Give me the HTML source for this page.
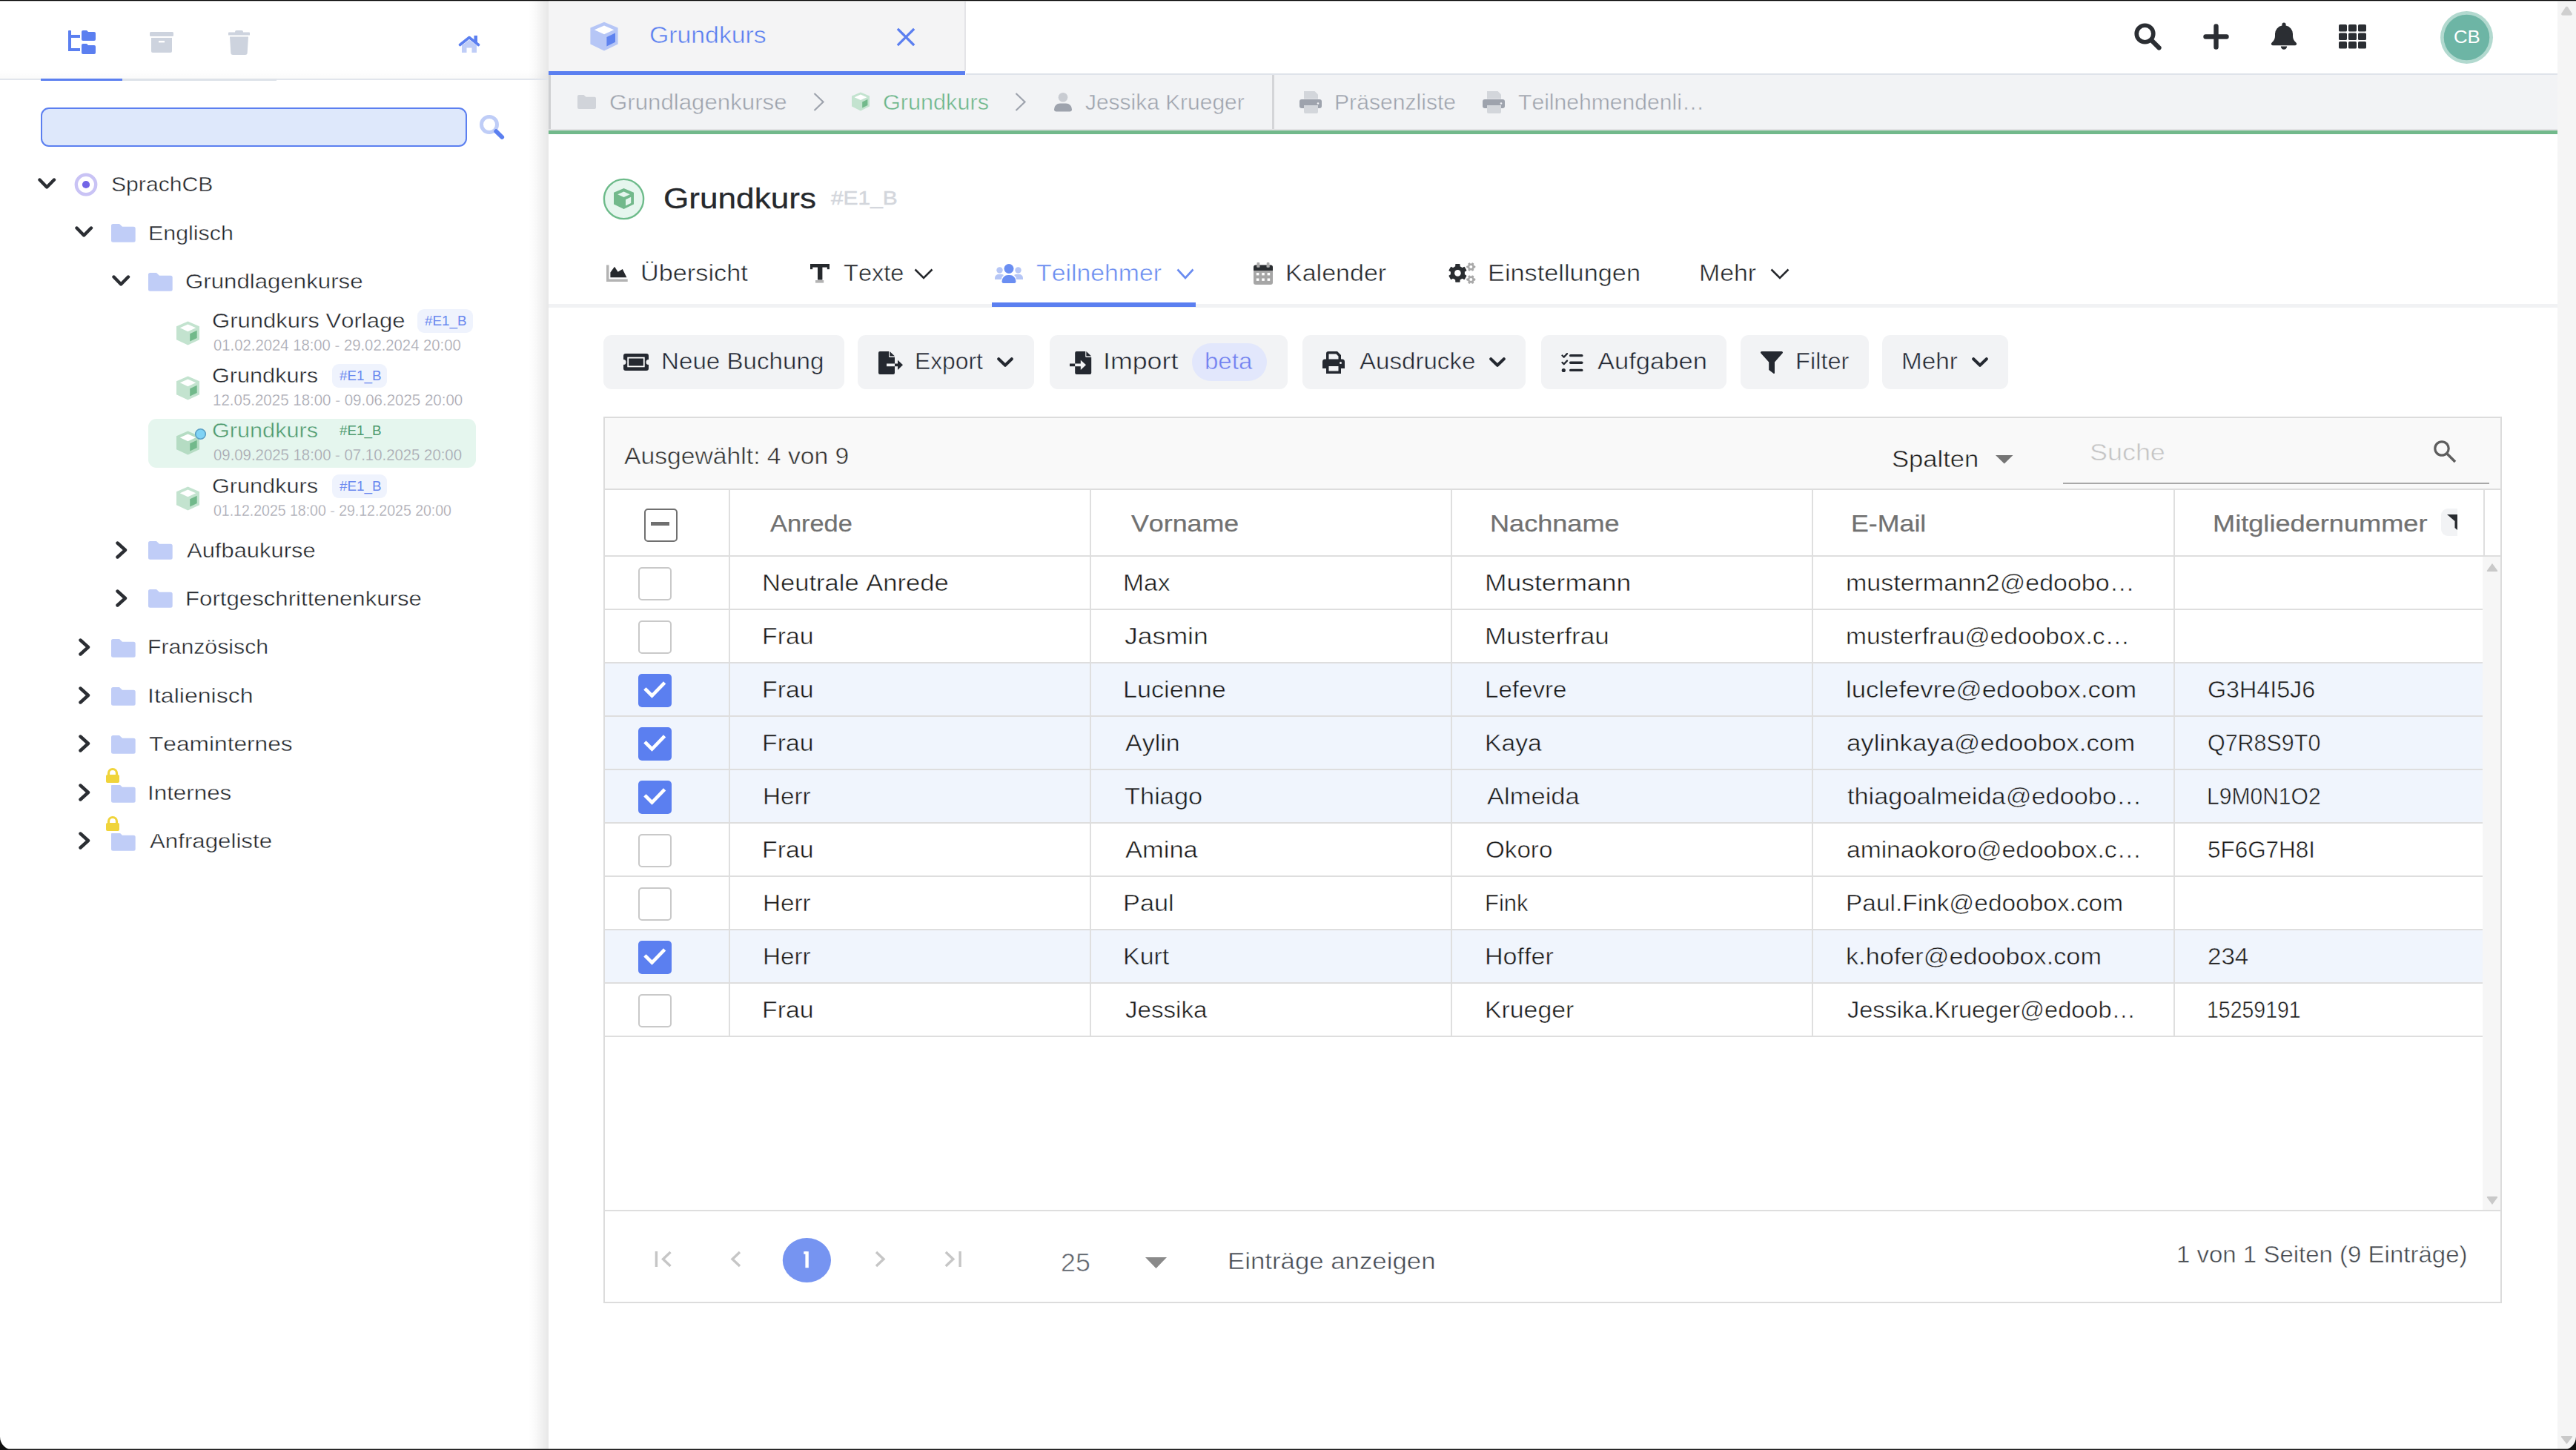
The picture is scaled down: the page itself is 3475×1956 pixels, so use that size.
<!DOCTYPE html>
<html><head><meta charset="utf-8"><title>Grundkurs</title><style>
html,body{margin:0;padding:0}
body{width:3475px;height:1956px;position:relative;overflow:hidden;background:#ffffff;font-family:"Liberation Sans",sans-serif;font-kerning:none}
.t{position:absolute;white-space:pre;transform-origin:0 0}
.r{position:absolute;display:block}
</style></head><body>
<div class="r" style="left:0px;top:0px;width:740px;height:1956px;background:#ffffff;"></div>
<div class="r" style="left:712px;top:0px;width:28px;height:1956px;background:linear-gradient(to right, rgba(0,0,0,0) 0%, rgba(0,0,0,0.02) 35%, rgba(0,0,0,0.06) 70%, rgba(0,0,0,0.095) 100%);"></div>
<svg class="r" style="left:92px;top:41px;" width="37" height="33" viewBox="0 0 37 33"><g fill="#5b7ff0">
<rect x="0" y="0" width="4" height="28" rx="1"/>
<rect x="0" y="6" width="16" height="4"/>
<rect x="0" y="24" width="16" height="4"/>
<path d="M18 2a2 2 0 0 1 2-2h5l2 2h8a2 2 0 0 1 2 2v8a2 2 0 0 1-2 2h-15a2 2 0 0 1-2-2z"/>
<path d="M18 20a2 2 0 0 1 2-2h5l2 2h8a2 2 0 0 1 2 2v8a2 2 0 0 1-2 2h-15a2 2 0 0 1-2-2z"/>
</g></svg>
<svg class="r" style="left:202px;top:43px;" width="33" height="29" viewBox="0 0 33 29"><g fill="#cdd3de">
<rect x="0" y="0" width="32" height="6" rx="1.5"/>
<path d="M2 8h28v18a2 2 0 0 1-2 2h-24a2 2 0 0 1-2-2z"/>
<rect x="12" y="12" width="8" height="2.4" fill="#fff"/>
</g></svg>
<svg class="r" style="left:308px;top:41px;" width="29" height="33" viewBox="0 0 29 33"><g fill="#cdd3de">
<path d="M9 2a2 2 0 0 1 2-2h7a2 2 0 0 1 2 2v0.5h8a1 1 0 0 1 1 1v3h-29v-3a1 1 0 0 1 1-1h8z"/>
<path d="M2 8.5h25l-1.3 21.5a3 3 0 0 1-3 3h-16.4a3 3 0 0 1-3-3z"/>
</g></svg>
<svg class="r" style="left:618px;top:48px;" width="33" height="25" viewBox="0 0 33 25"><path d="M2.5 12.5 L15 2.5 L27.5 12.5" fill="none" stroke="#5b7ff0" stroke-width="3.6" stroke-linecap="round" stroke-linejoin="round"/>
<rect x="21.5" y="0" width="4.5" height="9" fill="#5b7ff0"/>
<path d="M5 13.2 L15 5.8 L25 13.2 V23 H18.5 V16.5 H11.5 V23 H5z" fill="#bfcdf7"/></svg>
<div class="r" style="left:0px;top:94px;width:740px;height:12px;background:linear-gradient(to bottom, rgba(0,0,0,0), rgba(0,0,0,0.018));"></div>
<div class="r" style="left:0px;top:106px;width:740px;height:2px;background:#e1e5ec;"></div>
<div class="r" style="left:165px;top:106px;width:208px;height:3px;background:#dde2e9;"></div>
<div class="r" style="left:55px;top:106px;width:110px;height:3px;background:#5b7ff0;"></div>
<div class="r" style="left:55px;top:145px;width:575px;height:53px;background:#dee8fb;border:2px solid #5b7ff0;border-radius:11px;box-sizing:border-box;"></div>
<svg class="r" style="left:646px;top:154px;" width="36" height="36" viewBox="0 0 36 36"><circle cx="14" cy="14" r="10.5" fill="none" stroke="#bfcdf7" stroke-width="5"/>
<path d="M23.2 23.2 L31.2 31" stroke="#5b7ff0" stroke-width="5.8" stroke-linecap="round"/></svg>
<svg class="r" style="left:51px;top:240px;" width="25" height="16" viewBox="0 0 25 16"><path d="M2.5 2.5 L12.2 12.5 L22 2.5" fill="none" stroke="#2b2e33" stroke-width="4.4" stroke-linecap="round" stroke-linejoin="round"/></svg>
<svg class="r" style="left:100px;top:233px;" width="32" height="32" viewBox="0 0 32 32"><circle cx="16" cy="16" r="13.2" fill="none" stroke="#c9c3f5" stroke-width="4.4"/><circle cx="16" cy="16" r="5.1" fill="#7266e6"/></svg>
<div class="t" style="left:150.44px;top:234px;font-size:28.25px;line-height:28.25px;color:#22252a;transform:scaleX(1.0667);-webkit-text-stroke:0.45px #ffffff;">SprachCB</div>
<svg class="r" style="left:101px;top:305px;" width="25" height="16" viewBox="0 0 25 16"><path d="M2.5 2.5 L12.2 12.5 L22 2.5" fill="none" stroke="#2b2e33" stroke-width="4.4" stroke-linecap="round" stroke-linejoin="round"/></svg>
<svg class="r" style="left:150px;top:302px;" width="33" height="25" viewBox="0 0 33 25"><path d="M0 2.5a2.5 2.5 0 0 1 2.5-2.5h8.5l4 3.8h15.2a2.5 2.5 0 0 1 2.5 2.5v16a2.5 2.5 0 0 1-2.5 2.5h-27.7a2.5 2.5 0 0 1-2.5-2.5z" fill="#c0cdf7"/></svg>
<div class="t" style="left:199.67px;top:300px;font-size:28.25px;line-height:28.25px;color:#22252a;transform:scaleX(1.0751);-webkit-text-stroke:0.45px #ffffff;">Englisch</div>
<svg class="r" style="left:151px;top:371px;" width="25" height="16" viewBox="0 0 25 16"><path d="M2.5 2.5 L12.2 12.5 L22 2.5" fill="none" stroke="#2b2e33" stroke-width="4.4" stroke-linecap="round" stroke-linejoin="round"/></svg>
<svg class="r" style="left:200px;top:368px;" width="33" height="25" viewBox="0 0 33 25"><path d="M0 2.5a2.5 2.5 0 0 1 2.5-2.5h8.5l4 3.8h15.2a2.5 2.5 0 0 1 2.5 2.5v16a2.5 2.5 0 0 1-2.5 2.5h-27.7a2.5 2.5 0 0 1-2.5-2.5z" fill="#c0cdf7"/></svg>
<div class="t" style="left:250.14px;top:365px;font-size:28.25px;line-height:28.25px;color:#22252a;transform:scaleX(1.1056);-webkit-text-stroke:0.45px #ffffff;">Grundlagenkurse</div>
<svg class="r" style="left:237px;top:433.1px;" width="33" height="33" viewBox="0 0 33 33"><path d="M16.5 0.5 L32 7.2 V25.3 L16.5 32.5 L1 25.3 V7.2z" fill="#c3e3cf"/>
<path d="M16.5 4.6 L27.2 9.3 L16.5 14.2 L5.8 9.3z" fill="#ffffff"/>
<path d="M19.2 17.3 L28.7 12.7 V23 L19.2 27.6z" fill="#72b98b"/></svg>
<div class="t" style="left:286.35px;top:418px;font-size:28.25px;line-height:28.25px;color:#22252a;transform:scaleX(1.0985);-webkit-text-stroke:0.45px #ffffff;">Grundkurs Vorlage</div>
<div class="r" style="left:563px;top:417px;width:75px;height:32px;background:#eff3fd;border-radius:9px;"></div>
<div class="t" style="left:572.91px;top:423px;font-size:19.00px;line-height:19.00px;color:#6a88ef;transform:scaleX(0.9901);">#E1_B</div>
<div class="t" style="left:287.79px;top:456px;font-size:21.25px;line-height:21.25px;color:#a3a3ad;transform:scaleX(0.9544);-webkit-text-stroke:0.34px #ffffff;">01.02.2024 18:00 - 29.02.2024 20:00</div>
<svg class="r" style="left:237px;top:506.70000000000005px;" width="33" height="33" viewBox="0 0 33 33"><path d="M16.5 0.5 L32 7.2 V25.3 L16.5 32.5 L1 25.3 V7.2z" fill="#c3e3cf"/>
<path d="M16.5 4.6 L27.2 9.3 L16.5 14.2 L5.8 9.3z" fill="#ffffff"/>
<path d="M19.2 17.3 L28.7 12.7 V23 L19.2 27.6z" fill="#72b98b"/></svg>
<div class="t" style="left:286.37px;top:492px;font-size:28.25px;line-height:28.25px;color:#22252a;transform:scaleX(1.0847);-webkit-text-stroke:0.45px #ffffff;">Grundkurs</div>
<div class="r" style="left:448px;top:491px;width:74px;height:32px;background:#eff3fd;border-radius:9px;"></div>
<div class="t" style="left:457.91px;top:497px;font-size:19.00px;line-height:19.00px;color:#6a88ef;transform:scaleX(0.9901);">#E1_B</div>
<div class="t" style="left:287.06px;top:530px;font-size:21.25px;line-height:21.25px;color:#a3a3ad;transform:scaleX(0.9642);-webkit-text-stroke:0.34px #ffffff;">12.05.2025 18:00 - 09.06.2025 20:00</div>
<div class="r" style="left:200px;top:565px;width:442px;height:66px;background:#e5f6ee;border-radius:11px;"></div>
<svg class="r" style="left:237px;top:580.8px;" width="33" height="33" viewBox="0 0 33 33"><path d="M16.5 0.5 L32 7.2 V25.3 L16.5 32.5 L1 25.3 V7.2z" fill="#b5dcc3"/>
<path d="M16.5 4.6 L27.2 9.3 L16.5 14.2 L5.8 9.3z" fill="#ffffff"/>
<path d="M19.2 17.3 L28.7 12.7 V23 L19.2 27.6z" fill="#72b98b"/></svg>
<div class="t" style="left:286.37px;top:566px;font-size:28.25px;line-height:28.25px;color:#4e9a6e;transform:scaleX(1.0847);-webkit-text-stroke:0.45px #e5f6ee;">Grundkurs</div>
<div class="t" style="left:457.91px;top:571px;font-size:19.00px;line-height:19.00px;color:#4e9a6e;transform:scaleX(0.9901);">#E1_B</div>
<div class="t" style="left:287.79px;top:604px;font-size:21.25px;line-height:21.25px;color:#a3a3ad;transform:scaleX(0.9578);-webkit-text-stroke:0.34px #e5f6ee;">09.09.2025 18:00 - 07.10.2025 20:00</div>
<svg class="r" style="left:262px;top:577px;" width="17" height="17" viewBox="0 0 17 17"><circle cx="8.5" cy="8.5" r="6.8" fill="#7fd3f5" stroke="#5a9fc4" stroke-width="1.6"/></svg>
<svg class="r" style="left:237px;top:656.0px;" width="33" height="33" viewBox="0 0 33 33"><path d="M16.5 0.5 L32 7.2 V25.3 L16.5 32.5 L1 25.3 V7.2z" fill="#c3e3cf"/>
<path d="M16.5 4.6 L27.2 9.3 L16.5 14.2 L5.8 9.3z" fill="#ffffff"/>
<path d="M19.2 17.3 L28.7 12.7 V23 L19.2 27.6z" fill="#72b98b"/></svg>
<div class="t" style="left:286.37px;top:641px;font-size:28.25px;line-height:28.25px;color:#22252a;transform:scaleX(1.0847);-webkit-text-stroke:0.45px #ffffff;">Grundkurs</div>
<div class="r" style="left:448px;top:640px;width:74px;height:32px;background:#eff3fd;border-radius:9px;"></div>
<div class="t" style="left:457.91px;top:646px;font-size:19.00px;line-height:19.00px;color:#6a88ef;transform:scaleX(0.9901);">#E1_B</div>
<div class="t" style="left:287.82px;top:679px;font-size:21.25px;line-height:21.25px;color:#a3a3ad;transform:scaleX(0.9176);-webkit-text-stroke:0.34px #ffffff;">01.12.2025 18:00 - 29.12.2025 20:00</div>
<svg class="r" style="left:156px;top:730px;" width="17" height="24" viewBox="0 0 17 24"><path d="M2.5 2.5 L13 12 L2.5 21.5" fill="none" stroke="#2b2e33" stroke-width="4.4" stroke-linecap="round" stroke-linejoin="round"/></svg>
<svg class="r" style="left:200px;top:730px;" width="33" height="25" viewBox="0 0 33 25"><path d="M0 2.5a2.5 2.5 0 0 1 2.5-2.5h8.5l4 3.8h15.2a2.5 2.5 0 0 1 2.5 2.5v16a2.5 2.5 0 0 1-2.5 2.5h-27.7a2.5 2.5 0 0 1-2.5-2.5z" fill="#c0cdf7"/></svg>
<div class="t" style="left:252.00px;top:728px;font-size:28.25px;line-height:28.25px;color:#22252a;transform:scaleX(1.0950);-webkit-text-stroke:0.45px #ffffff;">Aufbaukurse</div>
<svg class="r" style="left:156px;top:795px;" width="17" height="24" viewBox="0 0 17 24"><path d="M2.5 2.5 L13 12 L2.5 21.5" fill="none" stroke="#2b2e33" stroke-width="4.4" stroke-linecap="round" stroke-linejoin="round"/></svg>
<svg class="r" style="left:200px;top:795px;" width="33" height="25" viewBox="0 0 33 25"><path d="M0 2.5a2.5 2.5 0 0 1 2.5-2.5h8.5l4 3.8h15.2a2.5 2.5 0 0 1 2.5 2.5v16a2.5 2.5 0 0 1-2.5 2.5h-27.7a2.5 2.5 0 0 1-2.5-2.5z" fill="#c0cdf7"/></svg>
<div class="t" style="left:249.50px;top:793px;font-size:28.25px;line-height:28.25px;color:#22252a;transform:scaleX(1.1040);-webkit-text-stroke:0.45px #ffffff;">Fortgeschrittenenkurse</div>
<svg class="r" style="left:106px;top:860.5px;" width="17" height="24" viewBox="0 0 17 24"><path d="M2.5 2.5 L13 12 L2.5 21.5" fill="none" stroke="#2b2e33" stroke-width="4.4" stroke-linecap="round" stroke-linejoin="round"/></svg>
<svg class="r" style="left:150px;top:861.5px;" width="33" height="25" viewBox="0 0 33 25"><path d="M0 2.5a2.5 2.5 0 0 1 2.5-2.5h8.5l4 3.8h15.2a2.5 2.5 0 0 1 2.5 2.5v16a2.5 2.5 0 0 1-2.5 2.5h-27.7a2.5 2.5 0 0 1-2.5-2.5z" fill="#c0cdf7"/></svg>
<div class="t" style="left:199.48px;top:858px;font-size:28.25px;line-height:28.25px;color:#22252a;transform:scaleX(1.0711);-webkit-text-stroke:0.45px #ffffff;">Französisch</div>
<svg class="r" style="left:106px;top:926.3px;" width="17" height="24" viewBox="0 0 17 24"><path d="M2.5 2.5 L13 12 L2.5 21.5" fill="none" stroke="#2b2e33" stroke-width="4.4" stroke-linecap="round" stroke-linejoin="round"/></svg>
<svg class="r" style="left:150px;top:927.3px;" width="33" height="25" viewBox="0 0 33 25"><path d="M0 2.5a2.5 2.5 0 0 1 2.5-2.5h8.5l4 3.8h15.2a2.5 2.5 0 0 1 2.5 2.5v16a2.5 2.5 0 0 1-2.5 2.5h-27.7a2.5 2.5 0 0 1-2.5-2.5z" fill="#c0cdf7"/></svg>
<div class="t" style="left:199.02px;top:924px;font-size:28.25px;line-height:28.25px;color:#22252a;transform:scaleX(1.1346);-webkit-text-stroke:0.45px #ffffff;">Italienisch</div>
<svg class="r" style="left:106px;top:991.4px;" width="17" height="24" viewBox="0 0 17 24"><path d="M2.5 2.5 L13 12 L2.5 21.5" fill="none" stroke="#2b2e33" stroke-width="4.4" stroke-linecap="round" stroke-linejoin="round"/></svg>
<svg class="r" style="left:150px;top:992.4px;" width="33" height="25" viewBox="0 0 33 25"><path d="M0 2.5a2.5 2.5 0 0 1 2.5-2.5h8.5l4 3.8h15.2a2.5 2.5 0 0 1 2.5 2.5v16a2.5 2.5 0 0 1-2.5 2.5h-27.7a2.5 2.5 0 0 1-2.5-2.5z" fill="#c0cdf7"/></svg>
<div class="t" style="left:201.27px;top:989px;font-size:28.25px;line-height:28.25px;color:#22252a;transform:scaleX(1.1214);-webkit-text-stroke:0.45px #ffffff;">Teaminternes</div>
<svg class="r" style="left:106px;top:1056.6px;" width="17" height="24" viewBox="0 0 17 24"><path d="M2.5 2.5 L13 12 L2.5 21.5" fill="none" stroke="#2b2e33" stroke-width="4.4" stroke-linecap="round" stroke-linejoin="round"/></svg>
<svg class="r" style="left:150px;top:1057.6px;" width="33" height="25" viewBox="0 0 33 25"><path d="M0 2.5a2.5 2.5 0 0 1 2.5-2.5h8.5l4 3.8h15.2a2.5 2.5 0 0 1 2.5 2.5v16a2.5 2.5 0 0 1-2.5 2.5h-27.7a2.5 2.5 0 0 1-2.5-2.5z" fill="#c0cdf7"/></svg>
<div class="t" style="left:199.08px;top:1055px;font-size:28.25px;line-height:28.25px;color:#22252a;transform:scaleX(1.1096);-webkit-text-stroke:0.45px #ffffff;">Internes</div>
<svg class="r" style="left:140px;top:1034.6px;" width="24" height="24" viewBox="0 0 24 24"><rect x="0" y="0" width="24" height="24" fill="#ffffff"/>
<path d="M6.5 10.5 V8 a5.5 5.5 0 0 1 11 0 V10.5" fill="none" stroke="#f0d43a" stroke-width="3.2"/>
<rect x="3" y="10" width="18" height="11" rx="2" fill="#f0d43a"/></svg>
<svg class="r" style="left:106px;top:1121.8px;" width="17" height="24" viewBox="0 0 17 24"><path d="M2.5 2.5 L13 12 L2.5 21.5" fill="none" stroke="#2b2e33" stroke-width="4.4" stroke-linecap="round" stroke-linejoin="round"/></svg>
<svg class="r" style="left:150px;top:1122.8px;" width="33" height="25" viewBox="0 0 33 25"><path d="M0 2.5a2.5 2.5 0 0 1 2.5-2.5h8.5l4 3.8h15.2a2.5 2.5 0 0 1 2.5 2.5v16a2.5 2.5 0 0 1-2.5 2.5h-27.7a2.5 2.5 0 0 1-2.5-2.5z" fill="#c0cdf7"/></svg>
<div class="t" style="left:201.90px;top:1120px;font-size:28.25px;line-height:28.25px;color:#22252a;transform:scaleX(1.1062);-webkit-text-stroke:0.45px #ffffff;">Anfrageliste</div>
<svg class="r" style="left:140px;top:1099.8px;" width="24" height="24" viewBox="0 0 24 24"><rect x="0" y="0" width="24" height="24" fill="#ffffff"/>
<path d="M6.5 10.5 V8 a5.5 5.5 0 0 1 11 0 V10.5" fill="none" stroke="#f0d43a" stroke-width="3.2"/>
<rect x="3" y="10" width="18" height="11" rx="2" fill="#f0d43a"/></svg>
<div class="r" style="left:740px;top:0px;width:2710px;height:101px;background:#ffffff;"></div>
<div class="r" style="left:740px;top:2px;width:562px;height:94px;background:#f4f4f5;"></div>
<div class="r" style="left:1301px;top:2px;width:2px;height:94px;background:#e4e4e7;"></div>
<div class="r" style="left:740px;top:96px;width:562px;height:5px;background:#5b7ff0;"></div>
<div class="r" style="left:1303px;top:99px;width:2147px;height:2px;background:#dfe3ea;"></div>
<svg class="r" style="left:795px;top:29px;" width="40" height="40" viewBox="0 0 40 40"><path d="M20 0.8 L38.6 8.6 V30.4 L20 39.4 L1.4 30.4 V8.6z" fill="#b6c6f6"/>
<path d="M20 5.6 L33.2 11.2 L20 17.2 L6.8 11.2z" fill="#ffffff"/>
<path d="M23.4 21 L35 15.4 V27.8 L23.4 33.4z" fill="#5f83ef"/></svg>
<div class="t" style="left:876.11px;top:33px;font-size:30.75px;line-height:30.75px;color:#5b7ff0;transform:scaleX(1.0987);-webkit-text-stroke:0.49px #f4f4f5;">Grundkurs</div>
<svg class="r" style="left:1209px;top:37px;" width="26" height="26" viewBox="0 0 26 26"><path d="M3 3 L23 23 M23 3 L3 23" stroke="#5b7ff0" stroke-width="3.2" stroke-linecap="square"/></svg>
<svg class="r" style="left:2878px;top:30px;" width="40" height="40" viewBox="0 0 40 40"><circle cx="15.5" cy="15.5" r="11.3" fill="none" stroke="#2b2e33" stroke-width="5.6"/><path d="M24 24 L34.5 34.5" stroke="#2b2e33" stroke-width="6.2" stroke-linecap="round"/></svg>
<svg class="r" style="left:2972px;top:32px;" width="35" height="35" viewBox="0 0 35 35"><path d="M17.5 3.5 V31.5 M3.5 17.5 H31.5" stroke="#2b2e33" stroke-width="6.4" stroke-linecap="round"/></svg>
<svg class="r" style="left:3063px;top:30px;" width="36" height="39" viewBox="0 0 36 39"><path d="M18 0.5 a2.6 2.6 0 0 1 2.6 2.6 v1.4 a11.5 11.5 0 0 1 9.4 11.3 v2.6 c0 3.3 1.4 6.3 3.9 8.6 l0.8 0.9 a2 2 0 0 1 -1.4 3.3 h-30.6 a2 2 0 0 1 -1.4 -3.3 l0.8 -0.9 c2.5 -2.3 3.9 -5.3 3.9 -8.6 v-2.6 a11.5 11.5 0 0 1 9.4 -11.3 v-1.4 a2.6 2.6 0 0 1 2.6 -2.6z" fill="#2b2e33"/>
<path d="M13.8 32.6 h8.4 a4.2 4.2 0 0 1 -8.4 0z" fill="#2b2e33"/></svg>
<svg class="r" style="left:3155px;top:33px;" width="38" height="33" viewBox="0 0 38 33"><rect x="0" y="0.0" width="11" height="9.5" rx="1.6" fill="#2b2e33"/><rect x="13" y="0.0" width="11" height="9.5" rx="1.6" fill="#2b2e33"/><rect x="26" y="0.0" width="11" height="9.5" rx="1.6" fill="#2b2e33"/><rect x="0" y="11.5" width="11" height="9.5" rx="1.6" fill="#2b2e33"/><rect x="13" y="11.5" width="11" height="9.5" rx="1.6" fill="#2b2e33"/><rect x="26" y="11.5" width="11" height="9.5" rx="1.6" fill="#2b2e33"/><rect x="0" y="23.0" width="11" height="9.5" rx="1.6" fill="#2b2e33"/><rect x="13" y="23.0" width="11" height="9.5" rx="1.6" fill="#2b2e33"/><rect x="26" y="23.0" width="11" height="9.5" rx="1.6" fill="#2b2e33"/></svg>
<svg class="r" style="left:3291px;top:14px;" width="73" height="73" viewBox="0 0 73 73"><circle cx="36.5" cy="36.5" r="35.5" fill="#b2d9cf"/><circle cx="36.5" cy="36.5" r="30.8" fill="#6db5a5"/></svg>
<div class="t" style="left:3310.41px;top:38px;font-size:24.00px;line-height:24.00px;color:#ffffff;transform:scaleX(1.0733);">CB</div>
<div class="r" style="left:740px;top:101px;width:2710px;height:73px;background:#f2f3f5;"></div>
<div class="r" style="left:740px;top:101px;width:3px;height:73px;background:#cfd0d2;"></div>
<div class="r" style="left:740px;top:174px;width:2710px;height:2px;background:#e2e2e4;"></div>
<div class="r" style="left:740px;top:176px;width:2710px;height:5px;background:#72b98b;"></div>
<svg class="r" style="left:779px;top:128px;" width="25" height="19" viewBox="0 0 25 19"><path d="M0 2a2 2 0 0 1 2-2h6.5l3 2.8h11.5a2 2 0 0 1 2 2v12.2a2 2 0 0 1-2 2h-21a2 2 0 0 1-2-2z" fill="#d1d4da"/></svg>
<div class="t" style="left:821.84px;top:124px;font-size:29.00px;line-height:29.00px;color:#9ea3ad;transform:scaleX(1.0770);-webkit-text-stroke:0.46px #f2f3f5;">Grundlagenkurse</div>
<svg class="r" style="left:1096px;top:124px;" width="18" height="27" viewBox="0 0 18 27"><path d="M2.5 2 L14.5 13.5 L2.5 25" fill="none" stroke="#9ea3ad" stroke-width="2.2"/></svg>
<svg class="r" style="left:1148px;top:124px;" width="26" height="26" viewBox="0 0 26 26"><path d="M13 0.5 L25 5.5 V19.5 L13 25.5 L1 19.5 V5.5z" fill="#c3e3cf"/>
<path d="M13 3.6 L21.4 7.2 L13 11 L4.6 7.2z" fill="#ffffff"/>
<path d="M15.2 13.5 L22.4 10 V18 L15.2 21.5z" fill="#72b98b"/></svg>
<div class="t" style="left:1191.47px;top:124px;font-size:29.00px;line-height:29.00px;color:#6cb68a;transform:scaleX(1.0559);-webkit-text-stroke:0.46px #f2f3f5;">Grundkurs</div>
<svg class="r" style="left:1368px;top:124px;" width="18" height="27" viewBox="0 0 18 27"><path d="M2.5 2 L14.5 13.5 L2.5 25" fill="none" stroke="#9ea3ad" stroke-width="2.2"/></svg>
<svg class="r" style="left:1422px;top:125px;" width="24" height="26" viewBox="0 0 24 26"><circle cx="12" cy="6.3" r="6.3" fill="#c9ccd2"/><path d="M0 22.5 a8 8 0 0 1 8-8h8a8 8 0 0 1 8 8v0.5a2.4 2.4 0 0 1-2.4 2.4h-19.2a2.4 2.4 0 0 1-2.4-2.4z" fill="#9ea3ad"/></svg>
<div class="t" style="left:1463.55px;top:124px;font-size:29.00px;line-height:29.00px;color:#9ea3ad;transform:scaleX(1.0323);-webkit-text-stroke:0.46px #f2f3f5;">Jessika Krueger</div>
<div class="r" style="left:1716px;top:101px;width:3px;height:73px;background:#d4d5d8;"></div>
<svg class="r" style="left:1753px;top:123px;" width="31" height="30" viewBox="0 0 31 30"><path d="M6 0 h14.5 l4.5 4.5 v6 h-19z" fill="#d3d6db"/>
<rect x="0" y="11" width="30" height="12" rx="3" fill="#9ea3ad"/>
<circle cx="25" cy="16.5" r="1.3" fill="#f2f3f5"/>
<path d="M6 19 h19 v9 a2 2 0 0 1-2 2h-15a2 2 0 0 1-2-2z" fill="#d3d6db"/></svg>
<div class="t" style="left:1800.19px;top:124px;font-size:29.00px;line-height:29.00px;color:#9ea3ad;transform:scaleX(1.0390);-webkit-text-stroke:0.46px #f2f3f5;">Präsenzliste</div>
<svg class="r" style="left:2000px;top:123px;" width="31" height="30" viewBox="0 0 31 30"><path d="M6 0 h14.5 l4.5 4.5 v6 h-19z" fill="#d3d6db"/>
<rect x="0" y="11" width="30" height="12" rx="3" fill="#9ea3ad"/>
<circle cx="25" cy="16.5" r="1.3" fill="#f2f3f5"/>
<path d="M6 19 h19 v9 a2 2 0 0 1-2 2h-15a2 2 0 0 1-2-2z" fill="#d3d6db"/></svg>
<div class="t" style="left:2048.40px;top:124px;font-size:29.00px;line-height:29.00px;color:#9ea3ad;transform:scaleX(1.0383);-webkit-text-stroke:0.46px #f2f3f5;">Teilnehmendenli…</div>
<div class="r" style="left:740px;top:181px;width:2710px;height:1775px;background:#ffffff;"></div>
<svg class="r" style="left:813px;top:240px;" width="57" height="57" viewBox="0 0 57 57"><circle cx="28.5" cy="28.5" r="26.6" fill="#e6f6ee" stroke="#6dbb8a" stroke-width="2.4"/>
<path d="M28.5 14 L42 19.8 V35.6 L28.5 42 L15 35.6 V19.8z" fill="#72b98b"/>
<path d="M28.5 18.6 L36.8 22.2 L28.5 26 L20.2 22.2z" fill="#e6f6ee"/>
<path d="M31 29.3 L38.2 25.8 V34 L31 37.6z" fill="#e6f6ee"/></svg>
<div class="t" style="left:895.49px;top:248px;font-size:39.50px;line-height:39.50px;color:#26292d;transform:scaleX(1.1170);-webkit-text-stroke:0.3px #26292d;">Grundkurs</div>
<div class="t" style="left:1120.85px;top:254px;font-size:26.25px;line-height:26.25px;color:#d3d6dc;transform:scaleX(1.1383);-webkit-text-stroke:0.45px #d3d6dc;">#E1_B</div>
<svg class="r" style="left:817px;top:356px;" width="31" height="25" viewBox="0 0 31 25"><path d="M1 1.4 h3.5 v19 h25.2 v3.5 h-28.7z" fill="#b3b3b3"/>
<path d="M6.4 18.2 V11.5 L12 3.7 L16.6 10.7 L22.8 7 L28.4 18.2z" fill="#26292d"/></svg>
<div class="t" style="left:864.23px;top:354px;font-size:30.75px;line-height:30.75px;color:#25282c;transform:scaleX(1.1146);-webkit-text-stroke:0.49px #ffffff;">Übersicht</div>
<svg class="r" style="left:1093px;top:356px;" width="27" height="27" viewBox="0 0 27 27"><g fill="#26292d"><rect x="0" y="0" width="26" height="4.6"/><rect x="0" y="0" width="3.2" height="7.2"/><rect x="22.8" y="0" width="3.2" height="7.2"/><rect x="10" y="0" width="6.4" height="21.5"/></g>
<rect x="7" y="22" width="11.2" height="3.6" fill="#b3b3b3"/></svg>
<div class="t" style="left:1138.35px;top:354px;font-size:30.75px;line-height:30.75px;color:#25282c;transform:scaleX(1.0588);-webkit-text-stroke:0.49px #ffffff;">Texte</div>
<svg class="r" style="left:1233px;top:362px;" width="26" height="15" viewBox="0 0 26 15"><path d="M1.5 1.5 L13.0 13 L24.5 1.5" fill="none" stroke="#25282c" stroke-width="2.6"/></svg>
<svg class="r" style="left:1342px;top:356px;" width="38" height="26" viewBox="0 0 38 26"><circle cx="19" cy="6.5" r="6.5" fill="#6a8ef2"/>
<circle cx="6.5" cy="8.5" r="4.2" fill="#b6c6f6"/><circle cx="31.5" cy="8.5" r="4.2" fill="#b6c6f6"/>
<path d="M0 19 a5 5 0 0 1 5-5h4a5 5 0 0 1 3 1 a8 8 0 0 0 -3 6 v0h-9z" fill="#b6c6f6"/>
<path d="M38 19 a5 5 0 0 0 -5-5h-4a5 5 0 0 0 -3 1 a8 8 0 0 1 3 6 v0h9z" fill="#b6c6f6"/>
<path d="M9.5 23.5 a8.5 8.5 0 0 1 8.5-8.5h2a8.5 8.5 0 0 1 8.5 8.5 v0.3 a2.2 2.2 0 0 1 -2.2 2.2 h-14.6 a2.2 2.2 0 0 1 -2.2 -2.2z" fill="#6a8ef2"/></svg>
<div class="t" style="left:1398.32px;top:354px;font-size:30.75px;line-height:30.75px;color:#6a8cf0;transform:scaleX(1.0985);-webkit-text-stroke:0.49px #ffffff;">Teilnehmer</div>
<svg class="r" style="left:1587px;top:362px;" width="24" height="15" viewBox="0 0 24 15"><path d="M1.5 1.5 L12.0 13 L22.5 1.5" fill="none" stroke="#6a8cf0" stroke-width="2.6"/></svg>
<div class="r" style="left:1338px;top:408px;width:275px;height:6px;background:#5b7ff0;"></div>
<svg class="r" style="left:1691px;top:354px;" width="26" height="30" viewBox="0 0 26 30"><rect x="4.5" y="0" width="3.8" height="6" rx="1" fill="#a9a9a9"/><rect x="17.7" y="0" width="3.8" height="6" rx="1" fill="#a9a9a9"/>
<path d="M0 6.5 a3 3 0 0 1 3-3 h1.5 v3 h3.8 v-3 h9.4 v3 h3.8 v-3 h1.5 a3 3 0 0 1 3 3 v4.5 h-26z" fill="#2a2d31"/>
<path d="M0 11 h26 v16 a3 3 0 0 1-3 3 h-20 a3 3 0 0 1-3-3z" fill="#a6a6a6"/>
<g fill="#ffffff"><rect x="3.8" y="14" width="3.6" height="3.4"/><rect x="11.2" y="14" width="3.6" height="3.4"/><rect x="18.6" y="14" width="3.6" height="3.4"/>
<rect x="3.8" y="21.5" width="3.6" height="3.4"/><rect x="11.2" y="21.5" width="3.6" height="3.4"/><rect x="18.6" y="21.5" width="3.6" height="3.4"/></g></svg>
<div class="t" style="left:1734.48px;top:354px;font-size:30.75px;line-height:30.75px;color:#25282c;transform:scaleX(1.1059);-webkit-text-stroke:0.49px #ffffff;">Kalender</div>
<svg class="r" style="left:1950px;top:352px;" width="42" height="36" viewBox="0 0 42 36"><g transform="translate(16.4,16.4)" fill="#2a2d31"><circle r="9.6"/><rect x="-3.2" y="-12.3" width="6.4" height="4.200000000000001" rx="0.8" transform="rotate(0)"/><rect x="-3.2" y="-12.3" width="6.4" height="4.200000000000001" rx="0.8" transform="rotate(60)"/><rect x="-3.2" y="-12.3" width="6.4" height="4.200000000000001" rx="0.8" transform="rotate(120)"/><rect x="-3.2" y="-12.3" width="6.4" height="4.200000000000001" rx="0.8" transform="rotate(180)"/><rect x="-3.2" y="-12.3" width="6.4" height="4.200000000000001" rx="0.8" transform="rotate(240)"/><rect x="-3.2" y="-12.3" width="6.4" height="4.200000000000001" rx="0.8" transform="rotate(300)"/><circle r="4.3" fill="#ffffff"/></g><g transform="translate(34.3,8)" fill="#a9a9a9"><circle r="4.5"/><rect x="-1.55" y="-6" width="3.1" height="3.0" rx="0.8" transform="rotate(30)"/><rect x="-1.55" y="-6" width="3.1" height="3.0" rx="0.8" transform="rotate(90)"/><rect x="-1.55" y="-6" width="3.1" height="3.0" rx="0.8" transform="rotate(150)"/><rect x="-1.55" y="-6" width="3.1" height="3.0" rx="0.8" transform="rotate(210)"/><rect x="-1.55" y="-6" width="3.1" height="3.0" rx="0.8" transform="rotate(270)"/><rect x="-1.55" y="-6" width="3.1" height="3.0" rx="0.8" transform="rotate(330)"/><circle r="2.0" fill="#ffffff"/></g><g transform="translate(34.3,25.1)" fill="#a9a9a9"><circle r="4.5"/><rect x="-1.55" y="-6" width="3.1" height="3.0" rx="0.8" transform="rotate(30)"/><rect x="-1.55" y="-6" width="3.1" height="3.0" rx="0.8" transform="rotate(90)"/><rect x="-1.55" y="-6" width="3.1" height="3.0" rx="0.8" transform="rotate(150)"/><rect x="-1.55" y="-6" width="3.1" height="3.0" rx="0.8" transform="rotate(210)"/><rect x="-1.55" y="-6" width="3.1" height="3.0" rx="0.8" transform="rotate(270)"/><rect x="-1.55" y="-6" width="3.1" height="3.0" rx="0.8" transform="rotate(330)"/><circle r="2.0" fill="#ffffff"/></g></svg>
<div class="t" style="left:2007.26px;top:354px;font-size:30.75px;line-height:30.75px;color:#25282c;transform:scaleX(1.1155);-webkit-text-stroke:0.49px #ffffff;">Einstellungen</div>
<div class="t" style="left:2292.09px;top:354px;font-size:30.75px;line-height:30.75px;color:#25282c;transform:scaleX(1.1009);-webkit-text-stroke:0.49px #ffffff;">Mehr</div>
<svg class="r" style="left:2388px;top:362px;" width="26" height="15" viewBox="0 0 26 15"><path d="M1.5 1.5 L13.0 13 L24.5 1.5" fill="none" stroke="#25282c" stroke-width="2.6"/></svg>
<div class="r" style="left:740px;top:410px;width:2710px;height:5px;background:#f1f2f4;"></div>
<div class="r" style="left:1338px;top:408px;width:275px;height:6px;background:#5b7ff0;"></div>
<div class="r" style="left:814px;top:452px;width:325px;height:73px;background:#f2f3f5;border-radius:11px;"></div>
<svg class="r" style="left:841px;top:477px;" width="34" height="23" viewBox="0 0 34 23"><path d="M0 3 a3 3 0 0 1 3-3 h28 a3 3 0 0 1 3 3 v5 a3.4 3.4 0 0 0 0 7 v5 a3 3 0 0 1 -3 3 h-28 a3 3 0 0 1 -3-3 v-5 a3.4 3.4 0 0 0 0-7z" fill="#242830"/>
<rect x="6.2" y="5.6" width="21.6" height="11.8" fill="none" stroke="#ffffff" stroke-width="1.8"/></svg>
<div class="t" style="left:891.85px;top:473px;font-size:30.75px;line-height:30.75px;color:#222631;transform:scaleX(1.0781);-webkit-text-stroke:0.49px #f2f3f5;">Neue Buchung</div>
<div class="r" style="left:1157px;top:452px;width:238px;height:73px;background:#f2f3f5;border-radius:11px;"></div>
<svg class="r" style="left:1185px;top:474px;" width="34" height="32" viewBox="0 0 34 32"><path d="M0 2 a2 2 0 0 1 2-2 h12 v6.8 a1.2 1.2 0 0 0 1.2 1.2 h6.8 v21 a2 2 0 0 1 -2 2 h-18 a2 2 0 0 1 -2-2z" fill="#242830"/>
<path d="M15.2 0 L22 6.6 H15.2z" fill="#242830"/>
<rect x="11" y="16.5" width="11" height="3.7" fill="#f2f3f5"/><rect x="22" y="16.5" width="4.2" height="3.7" fill="#242830"/>
<path d="M26 11.7 L33 18.35 L26 25z" fill="#242830"/></svg>
<div class="t" style="left:1234.46px;top:473px;font-size:30.75px;line-height:30.75px;color:#222631;transform:scaleX(1.0337);-webkit-text-stroke:0.49px #f2f3f5;">Export</div>
<svg class="r" style="left:1345px;top:482px;" width="22" height="14" viewBox="0 0 22 14"><path d="M2.2 2.2 L11 10.8 L19.8 2.2" fill="none" stroke="#242830" stroke-width="4" stroke-linecap="round" stroke-linejoin="round"/></svg>
<div class="r" style="left:1416px;top:452px;width:321px;height:73px;background:#f2f3f5;border-radius:11px;"></div>
<svg class="r" style="left:1443px;top:474px;" width="30" height="32" viewBox="0 0 30 32"><path d="M7.2 2 a2 2 0 0 1 2-2 h12 v6.8 a1.2 1.2 0 0 0 1.2 1.2 h6.8 v21 a2 2 0 0 1 -2 2 h-18 a2 2 0 0 1 -2-2z" fill="#242830"/>
<path d="M22.4 0 L29.2 6.6 H22.4z" fill="#242830"/>
<rect x="0" y="16.5" width="7.2" height="3.7" fill="#242830"/><rect x="7.2" y="16.5" width="7.8" height="3.7" fill="#f2f3f5"/>
<path d="M14.8 11.7 L22 18.35 L14.8 25z" fill="#f2f3f5"/></svg>
<div class="t" style="left:1488.38px;top:473px;font-size:30.75px;line-height:30.75px;color:#222631;transform:scaleX(1.1629);-webkit-text-stroke:0.49px #f2f3f5;">Import</div>
<div class="r" style="left:1608px;top:463px;width:101px;height:51px;background:#e2e7fc;border-radius:26px;"></div>
<div class="t" style="left:1625.25px;top:473px;font-size:30.75px;line-height:30.75px;color:#6f7ff0;transform:scaleX(1.0742);-webkit-text-stroke:0.49px #e2e7fc;">beta</div>
<div class="r" style="left:1757px;top:452px;width:301px;height:73px;background:#f2f3f5;border-radius:11px;"></div>
<svg class="r" style="left:1784px;top:474px;" width="31" height="30" viewBox="0 0 31 30"><path d="M5 3 a3 3 0 0 1 3-3 h12 l5 5 v6 h-3.5 v-4.5 l-3-3 h-10 v7.5 h-3.5z" fill="#242830"/>
<path d="M0 14 a3.5 3.5 0 0 1 3.5-3.5 h23 a3.5 3.5 0 0 1 3.5 3.5 v9 h-5 v7 h-20 v-7 h-5z" fill="#242830"/>
<rect x="8.5" y="20" width="13" height="6.5" fill="#f2f3f5"/><circle cx="24.5" cy="15.5" r="1.5" fill="#f2f3f5"/></svg>
<div class="t" style="left:1834.30px;top:473px;font-size:30.75px;line-height:30.75px;color:#222631;transform:scaleX(1.0764);-webkit-text-stroke:0.49px #f2f3f5;">Ausdrucke</div>
<svg class="r" style="left:2009px;top:482px;" width="22" height="14" viewBox="0 0 22 14"><path d="M2.2 2.2 L11 10.8 L19.8 2.2" fill="none" stroke="#242830" stroke-width="4" stroke-linecap="round" stroke-linejoin="round"/></svg>
<div class="r" style="left:2079px;top:452px;width:250px;height:73px;background:#f2f3f5;border-radius:11px;"></div>
<svg class="r" style="left:2106px;top:475px;" width="30" height="28" viewBox="0 0 30 28"><path d="M1.5 4.5 l2.2 2.2 l4.3-4.6 M1.5 14 l2.2 2.2 l4.3-4.6" fill="none" stroke="#242830" stroke-width="2.3" stroke-linecap="round" stroke-linejoin="round"/>
<circle cx="3.3" cy="24.5" r="2.6" fill="#242830"/>
<rect x="11" y="3" width="18.5" height="3.3" rx="1.6" fill="#242830"/><rect x="11" y="12.6" width="18.5" height="3.3" rx="1.6" fill="#242830"/><rect x="11" y="22.8" width="18.5" height="3.3" rx="1.6" fill="#242830"/></svg>
<div class="t" style="left:2155.40px;top:473px;font-size:30.75px;line-height:30.75px;color:#222631;transform:scaleX(1.1234);-webkit-text-stroke:0.49px #f2f3f5;">Aufgaben</div>
<div class="r" style="left:2348px;top:452px;width:173px;height:73px;background:#f2f3f5;border-radius:11px;"></div>
<svg class="r" style="left:2374px;top:474px;" width="31" height="30" viewBox="0 0 31 30"><path d="M1.5 0 h28 a1.5 1.5 0 0 1 1.1 2.5 l-10.6 12 v14.5 a1 1 0 0 1 -1.6 0.8 l-6.2-4.8 v-10.5 l-10.8-12 a1.5 1.5 0 0 1 1.1-2.5z" fill="#242830"/></svg>
<div class="t" style="left:2421.89px;top:473px;font-size:30.75px;line-height:30.75px;color:#222631;transform:scaleX(1.0605);-webkit-text-stroke:0.49px #f2f3f5;">Filter</div>
<div class="r" style="left:2539px;top:452px;width:170px;height:73px;background:#f2f3f5;border-radius:11px;"></div>
<div class="t" style="left:2565.34px;top:473px;font-size:30.75px;line-height:30.75px;color:#222631;transform:scaleX(1.0830);-webkit-text-stroke:0.49px #f2f3f5;">Mehr</div>
<svg class="r" style="left:2660px;top:482px;" width="22" height="14" viewBox="0 0 22 14"><path d="M2.2 2.2 L11 10.8 L19.8 2.2" fill="none" stroke="#242830" stroke-width="4" stroke-linecap="round" stroke-linejoin="round"/></svg>
<div class="r" style="left:814px;top:562px;width:2561px;height:1196px;background:#ffffff;border:2px solid #dcdcdc;box-sizing:border-box;"></div>
<div class="r" style="left:816px;top:564px;width:2557px;height:95px;background:#f9f9f9;"></div>
<div class="r" style="left:816px;top:659px;width:2557px;height:2px;background:#dddddd;"></div>
<div class="t" style="left:841.70px;top:601px;font-size:30.75px;line-height:30.75px;color:#333333;transform:scaleX(1.0954);-webkit-text-stroke:0.49px #f9f9f9;">Ausgewählt: 4 von 9</div>
<div class="t" style="left:2552.34px;top:604px;font-size:31.25px;line-height:31.25px;color:#1f1f1f;transform:scaleX(1.1073);-webkit-text-stroke:0.50px #f9f9f9;">Spalten</div>
<svg class="r" style="left:2692px;top:614px;" width="24" height="13" viewBox="0 0 24 13"><path d="M0 0 h23.5 l-11.75 11.5z" fill="#757575"/></svg>
<div class="t" style="left:2819.38px;top:595px;font-size:31.25px;line-height:31.25px;color:#c4c4c4;transform:scaleX(1.1494);-webkit-text-stroke:0.50px #f9f9f9;">Suche</div>
<svg class="r" style="left:3282px;top:593px;" width="33" height="32" viewBox="0 0 33 32"><circle cx="12" cy="12" r="9.2" fill="none" stroke="#5e5e5e" stroke-width="3.2"/><path d="M19 19 L30 30" stroke="#5e5e5e" stroke-width="3.6"/></svg>
<div class="r" style="left:2783px;top:651px;width:575px;height:2px;background:#a8a8a8;"></div>
<div class="r" style="left:982.5px;top:661px;width:2px;height:89px;background:#dfdfdf;"></div>
<div class="r" style="left:1470px;top:661px;width:2px;height:89px;background:#dfdfdf;"></div>
<div class="r" style="left:1956.6px;top:661px;width:2px;height:89px;background:#dfdfdf;"></div>
<div class="r" style="left:2444.3px;top:661px;width:2px;height:89px;background:#dfdfdf;"></div>
<div class="r" style="left:2931.5px;top:661px;width:2px;height:89px;background:#dfdfdf;"></div>
<div class="r" style="left:3350px;top:661px;width:2px;height:89px;background:#dfdfdf;"></div>
<div class="r" style="left:816px;top:749px;width:2557px;height:2px;background:#dedede;"></div>
<div class="r" style="left:869px;top:686px;width:45px;height:45px;background:#ffffff;border:2px solid #707070;border-radius:5px;box-sizing:border-box;"></div>
<div class="r" style="left:878px;top:704px;width:25px;height:5px;background:#707070;"></div>
<div class="t" style="left:1039.00px;top:691px;font-size:30.50px;line-height:30.50px;color:#717171;transform:scaleX(1.1269);-webkit-text-stroke:0.25px #717171;">Anrede</div>
<div class="t" style="left:1526.02px;top:691px;font-size:30.50px;line-height:30.50px;color:#717171;transform:scaleX(1.1729);-webkit-text-stroke:0.25px #717171;">Vorname</div>
<div class="t" style="left:2010.31px;top:691px;font-size:30.50px;line-height:30.50px;color:#717171;transform:scaleX(1.1834);-webkit-text-stroke:0.25px #717171;">Nachname</div>
<div class="t" style="left:2497.14px;top:691px;font-size:30.50px;line-height:30.50px;color:#717171;transform:scaleX(1.1723);-webkit-text-stroke:0.25px #717171;">E-Mail</div>
<div class="t" style="left:2985.11px;top:691px;font-size:30.50px;line-height:30.50px;color:#717171;transform:scaleX(1.1862);-webkit-text-stroke:0.25px #717171;">Mitgliedernummer</div>
<div class="r" style="left:3293px;top:686px;width:22px;height:37px;background:#f2f3f5;border-radius:9px 0 0 9px;"></div>
<svg class="r" style="left:3301px;top:694px;" width="14" height="21" viewBox="0 0 14 21"><path d="M0 0 h14 v21 l-3.5-3 v-9z" fill="#2a2d31"/></svg>
<div class="r" style="left:3349px;top:751px;width:24px;height:882px;background:#f6f6f6;"></div>
<svg class="r" style="left:3354px;top:759px;" width="16" height="12" viewBox="0 0 16 12"><path d="M8 1 L15 10.5 a1 1 0 0 1 -0.8 1.5 h-12.4 a1 1 0 0 1 -0.8 -1.5z" fill="#c9c9c9"/></svg>
<svg class="r" style="left:3354px;top:1614px;" width="16" height="12" viewBox="0 0 16 12"><path d="M8 11 L15 1.5 a1 1 0 0 0 -0.8 -1.5 h-12.4 a1 1 0 0 0 -0.8 1.5z" fill="#c9c9c9"/></svg>
<div class="r" style="left:816px;top:821px;width:2533px;height:2px;background:#dedede;"></div>
<div class="r" style="left:982.5px;top:751px;width:2px;height:70px;background:#dfdfdf;"></div>
<div class="r" style="left:1470px;top:751px;width:2px;height:70px;background:#dfdfdf;"></div>
<div class="r" style="left:1956.6px;top:751px;width:2px;height:70px;background:#dfdfdf;"></div>
<div class="r" style="left:2444.3px;top:751px;width:2px;height:70px;background:#dfdfdf;"></div>
<div class="r" style="left:2931.5px;top:751px;width:2px;height:70px;background:#dfdfdf;"></div>
<div class="r" style="left:861px;top:765px;width:45px;height:45px;background:#ffffff;border:2px solid #c9c9c9;border-radius:5px;box-sizing:border-box;"></div>
<div class="t" style="left:1028.44px;top:772px;font-size:30.75px;line-height:30.75px;color:#1c1c1c;transform:scaleX(1.1236);-webkit-text-stroke:0.49px #ffffff;">Neutrale Anrede</div>
<div class="t" style="left:1515.31px;top:772px;font-size:30.75px;line-height:30.75px;color:#1c1c1c;transform:scaleX(1.0930);-webkit-text-stroke:0.49px #ffffff;">Max</div>
<div class="t" style="left:2002.86px;top:772px;font-size:30.75px;line-height:30.75px;color:#1c1c1c;transform:scaleX(1.1535);-webkit-text-stroke:0.49px #ffffff;">Mustermann</div>
<div class="t" style="left:2490.29px;top:772px;font-size:30.75px;line-height:30.75px;color:#1c1c1c;transform:scaleX(1.1051);-webkit-text-stroke:0.49px #ffffff;">mustermann2@edoobo…</div>
<div class="r" style="left:816px;top:893px;width:2533px;height:2px;background:#dedede;"></div>
<div class="r" style="left:982.5px;top:823px;width:2px;height:70px;background:#dfdfdf;"></div>
<div class="r" style="left:1470px;top:823px;width:2px;height:70px;background:#dfdfdf;"></div>
<div class="r" style="left:1956.6px;top:823px;width:2px;height:70px;background:#dfdfdf;"></div>
<div class="r" style="left:2444.3px;top:823px;width:2px;height:70px;background:#dfdfdf;"></div>
<div class="r" style="left:2931.5px;top:823px;width:2px;height:70px;background:#dfdfdf;"></div>
<div class="r" style="left:861px;top:837px;width:45px;height:45px;background:#ffffff;border:2px solid #c9c9c9;border-radius:5px;box-sizing:border-box;"></div>
<div class="t" style="left:1028.49px;top:844px;font-size:30.75px;line-height:30.75px;color:#1c1c1c;transform:scaleX(1.0999);-webkit-text-stroke:0.49px #ffffff;">Frau</div>
<div class="t" style="left:1517.47px;top:844px;font-size:30.75px;line-height:30.75px;color:#1c1c1c;transform:scaleX(1.1585);-webkit-text-stroke:0.49px #ffffff;">Jasmin</div>
<div class="t" style="left:2002.89px;top:844px;font-size:30.75px;line-height:30.75px;color:#1c1c1c;transform:scaleX(1.1422);-webkit-text-stroke:0.49px #ffffff;">Musterfrau</div>
<div class="t" style="left:2490.32px;top:844px;font-size:30.75px;line-height:30.75px;color:#1c1c1c;transform:scaleX(1.0922);-webkit-text-stroke:0.49px #ffffff;">musterfrau@edoobox.c…</div>
<div class="r" style="left:816px;top:895px;width:2533px;height:70px;background:#f0f5fd;"></div>
<div class="r" style="left:816px;top:965px;width:2533px;height:2px;background:#dedede;"></div>
<div class="r" style="left:982.5px;top:895px;width:2px;height:70px;background:#dfdfdf;"></div>
<div class="r" style="left:1470px;top:895px;width:2px;height:70px;background:#dfdfdf;"></div>
<div class="r" style="left:1956.6px;top:895px;width:2px;height:70px;background:#dfdfdf;"></div>
<div class="r" style="left:2444.3px;top:895px;width:2px;height:70px;background:#dfdfdf;"></div>
<div class="r" style="left:2931.5px;top:895px;width:2px;height:70px;background:#dfdfdf;"></div>
<div class="r" style="left:861px;top:909px;width:45px;height:45px;background:#5b7ff0;border-radius:5px;"></div>
<svg class="r" style="left:861px;top:908px;" width="45" height="45" viewBox="0 0 45 45"><path d="M10.5 22.5 L18.5 30.5 L34 14.5" fill="none" stroke="#ffffff" stroke-width="4.6" stroke-linecap="square"/></svg>
<div class="t" style="left:1028.49px;top:916px;font-size:30.75px;line-height:30.75px;color:#1c1c1c;transform:scaleX(1.0999);-webkit-text-stroke:0.49px #f0f5fd;">Frau</div>
<div class="t" style="left:1515.27px;top:916px;font-size:30.75px;line-height:30.75px;color:#1c1c1c;transform:scaleX(1.1116);-webkit-text-stroke:0.49px #f0f5fd;">Lucienne</div>
<div class="t" style="left:2003.05px;top:916px;font-size:30.75px;line-height:30.75px;color:#1c1c1c;transform:scaleX(1.0769);-webkit-text-stroke:0.49px #f0f5fd;">Lefevre</div>
<div class="t" style="left:2490.24px;top:916px;font-size:30.75px;line-height:30.75px;color:#1c1c1c;transform:scaleX(1.1287);-webkit-text-stroke:0.49px #f0f5fd;">luclefevre@edoobox.com</div>
<div class="t" style="left:2977.69px;top:916px;font-size:30.75px;line-height:30.75px;color:#1c1c1c;transform:scaleX(1.0486);-webkit-text-stroke:0.49px #f0f5fd;">G3H4I5J6</div>
<div class="r" style="left:816px;top:967px;width:2533px;height:70px;background:#f0f5fd;"></div>
<div class="r" style="left:816px;top:1037px;width:2533px;height:2px;background:#dedede;"></div>
<div class="r" style="left:982.5px;top:967px;width:2px;height:70px;background:#dfdfdf;"></div>
<div class="r" style="left:1470px;top:967px;width:2px;height:70px;background:#dfdfdf;"></div>
<div class="r" style="left:1956.6px;top:967px;width:2px;height:70px;background:#dfdfdf;"></div>
<div class="r" style="left:2444.3px;top:967px;width:2px;height:70px;background:#dfdfdf;"></div>
<div class="r" style="left:2931.5px;top:967px;width:2px;height:70px;background:#dfdfdf;"></div>
<div class="r" style="left:861px;top:981px;width:45px;height:45px;background:#5b7ff0;border-radius:5px;"></div>
<svg class="r" style="left:861px;top:980px;" width="45" height="45" viewBox="0 0 45 45"><path d="M10.5 22.5 L18.5 30.5 L34 14.5" fill="none" stroke="#ffffff" stroke-width="4.6" stroke-linecap="square"/></svg>
<div class="t" style="left:1028.49px;top:988px;font-size:30.75px;line-height:30.75px;color:#1c1c1c;transform:scaleX(1.0999);-webkit-text-stroke:0.49px #f0f5fd;">Frau</div>
<div class="t" style="left:1518.00px;top:988px;font-size:30.75px;line-height:30.75px;color:#1c1c1c;transform:scaleX(1.1058);-webkit-text-stroke:0.49px #f0f5fd;">Aylin</div>
<div class="t" style="left:2003.01px;top:988px;font-size:30.75px;line-height:30.75px;color:#1c1c1c;transform:scaleX(1.0939);-webkit-text-stroke:0.49px #f0f5fd;">Kaya</div>
<div class="t" style="left:2491.11px;top:988px;font-size:30.75px;line-height:30.75px;color:#1c1c1c;transform:scaleX(1.1310);-webkit-text-stroke:0.49px #f0f5fd;">aylinkaya@edoobox.com</div>
<div class="t" style="left:2977.93px;top:988px;font-size:30.75px;line-height:30.75px;color:#1c1c1c;transform:scaleX(0.9902);-webkit-text-stroke:0.49px #f0f5fd;">Q7R8S9T0</div>
<div class="r" style="left:816px;top:1039px;width:2533px;height:70px;background:#f0f5fd;"></div>
<div class="r" style="left:816px;top:1109px;width:2533px;height:2px;background:#dedede;"></div>
<div class="r" style="left:982.5px;top:1039px;width:2px;height:70px;background:#dfdfdf;"></div>
<div class="r" style="left:1470px;top:1039px;width:2px;height:70px;background:#dfdfdf;"></div>
<div class="r" style="left:1956.6px;top:1039px;width:2px;height:70px;background:#dfdfdf;"></div>
<div class="r" style="left:2444.3px;top:1039px;width:2px;height:70px;background:#dfdfdf;"></div>
<div class="r" style="left:2931.5px;top:1039px;width:2px;height:70px;background:#dfdfdf;"></div>
<div class="r" style="left:861px;top:1053px;width:45px;height:45px;background:#5b7ff0;border-radius:5px;"></div>
<svg class="r" style="left:861px;top:1052px;" width="45" height="45" viewBox="0 0 45 45"><path d="M10.5 22.5 L18.5 30.5 L34 14.5" fill="none" stroke="#ffffff" stroke-width="4.6" stroke-linecap="square"/></svg>
<div class="t" style="left:1028.54px;top:1060px;font-size:30.75px;line-height:30.75px;color:#1c1c1c;transform:scaleX(1.0822);-webkit-text-stroke:0.49px #f0f5fd;">Herr</div>
<div class="t" style="left:1517.31px;top:1060px;font-size:30.75px;line-height:30.75px;color:#1c1c1c;transform:scaleX(1.1195);-webkit-text-stroke:0.49px #f0f5fd;">Thiago</div>
<div class="t" style="left:2005.70px;top:1060px;font-size:30.75px;line-height:30.75px;color:#1c1c1c;transform:scaleX(1.1233);-webkit-text-stroke:0.49px #f0f5fd;">Almeida</div>
<div class="t" style="left:2491.99px;top:1060px;font-size:30.75px;line-height:30.75px;color:#1c1c1c;transform:scaleX(1.1159);-webkit-text-stroke:0.49px #f0f5fd;">thiagoalmeida@edoobo…</div>
<div class="t" style="left:2976.90px;top:1060px;font-size:30.75px;line-height:30.75px;color:#1c1c1c;transform:scaleX(0.9772);-webkit-text-stroke:0.49px #f0f5fd;">L9M0N1O2</div>
<div class="r" style="left:816px;top:1181px;width:2533px;height:2px;background:#dedede;"></div>
<div class="r" style="left:982.5px;top:1111px;width:2px;height:70px;background:#dfdfdf;"></div>
<div class="r" style="left:1470px;top:1111px;width:2px;height:70px;background:#dfdfdf;"></div>
<div class="r" style="left:1956.6px;top:1111px;width:2px;height:70px;background:#dfdfdf;"></div>
<div class="r" style="left:2444.3px;top:1111px;width:2px;height:70px;background:#dfdfdf;"></div>
<div class="r" style="left:2931.5px;top:1111px;width:2px;height:70px;background:#dfdfdf;"></div>
<div class="r" style="left:861px;top:1125px;width:45px;height:45px;background:#ffffff;border:2px solid #c9c9c9;border-radius:5px;box-sizing:border-box;"></div>
<div class="t" style="left:1028.49px;top:1132px;font-size:30.75px;line-height:30.75px;color:#1c1c1c;transform:scaleX(1.0999);-webkit-text-stroke:0.49px #ffffff;">Frau</div>
<div class="t" style="left:1518.00px;top:1132px;font-size:30.75px;line-height:30.75px;color:#1c1c1c;transform:scaleX(1.1219);-webkit-text-stroke:0.49px #ffffff;">Amina</div>
<div class="t" style="left:2004.21px;top:1132px;font-size:30.75px;line-height:30.75px;color:#1c1c1c;transform:scaleX(1.0787);-webkit-text-stroke:0.49px #ffffff;">Okoro</div>
<div class="t" style="left:2491.16px;top:1132px;font-size:30.75px;line-height:30.75px;color:#1c1c1c;transform:scaleX(1.0920);-webkit-text-stroke:0.49px #ffffff;">aminaokoro@edoobox.c…</div>
<div class="t" style="left:2978.04px;top:1132px;font-size:30.75px;line-height:30.75px;color:#1c1c1c;transform:scaleX(1.0221);-webkit-text-stroke:0.49px #ffffff;">5F6G7H8I</div>
<div class="r" style="left:816px;top:1253px;width:2533px;height:2px;background:#dedede;"></div>
<div class="r" style="left:982.5px;top:1183px;width:2px;height:70px;background:#dfdfdf;"></div>
<div class="r" style="left:1470px;top:1183px;width:2px;height:70px;background:#dfdfdf;"></div>
<div class="r" style="left:1956.6px;top:1183px;width:2px;height:70px;background:#dfdfdf;"></div>
<div class="r" style="left:2444.3px;top:1183px;width:2px;height:70px;background:#dfdfdf;"></div>
<div class="r" style="left:2931.5px;top:1183px;width:2px;height:70px;background:#dfdfdf;"></div>
<div class="r" style="left:861px;top:1197px;width:45px;height:45px;background:#ffffff;border:2px solid #c9c9c9;border-radius:5px;box-sizing:border-box;"></div>
<div class="t" style="left:1028.54px;top:1204px;font-size:30.75px;line-height:30.75px;color:#1c1c1c;transform:scaleX(1.0822);-webkit-text-stroke:0.49px #ffffff;">Herr</div>
<div class="t" style="left:1515.25px;top:1204px;font-size:30.75px;line-height:30.75px;color:#1c1c1c;transform:scaleX(1.1167);-webkit-text-stroke:0.49px #ffffff;">Paul</div>
<div class="t" style="left:2003.22px;top:1204px;font-size:30.75px;line-height:30.75px;color:#1c1c1c;transform:scaleX(1.0062);-webkit-text-stroke:0.49px #ffffff;">Fink</div>
<div class="t" style="left:2489.83px;top:1204px;font-size:30.75px;line-height:30.75px;color:#1c1c1c;transform:scaleX(1.0873);-webkit-text-stroke:0.49px #ffffff;">Paul.Fink@edoobox.com</div>
<div class="r" style="left:816px;top:1255px;width:2533px;height:70px;background:#f0f5fd;"></div>
<div class="r" style="left:816px;top:1325px;width:2533px;height:2px;background:#dedede;"></div>
<div class="r" style="left:982.5px;top:1255px;width:2px;height:70px;background:#dfdfdf;"></div>
<div class="r" style="left:1470px;top:1255px;width:2px;height:70px;background:#dfdfdf;"></div>
<div class="r" style="left:1956.6px;top:1255px;width:2px;height:70px;background:#dfdfdf;"></div>
<div class="r" style="left:2444.3px;top:1255px;width:2px;height:70px;background:#dfdfdf;"></div>
<div class="r" style="left:2931.5px;top:1255px;width:2px;height:70px;background:#dfdfdf;"></div>
<div class="r" style="left:861px;top:1269px;width:45px;height:45px;background:#5b7ff0;border-radius:5px;"></div>
<svg class="r" style="left:861px;top:1268px;" width="45" height="45" viewBox="0 0 45 45"><path d="M10.5 22.5 L18.5 30.5 L34 14.5" fill="none" stroke="#ffffff" stroke-width="4.6" stroke-linecap="square"/></svg>
<div class="t" style="left:1028.54px;top:1276px;font-size:30.75px;line-height:30.75px;color:#1c1c1c;transform:scaleX(1.0822);-webkit-text-stroke:0.49px #f0f5fd;">Herr</div>
<div class="t" style="left:1515.29px;top:1276px;font-size:30.75px;line-height:30.75px;color:#1c1c1c;transform:scaleX(1.1033);-webkit-text-stroke:0.49px #f0f5fd;">Kurt</div>
<div class="t" style="left:2002.97px;top:1276px;font-size:30.75px;line-height:30.75px;color:#1c1c1c;transform:scaleX(1.1086);-webkit-text-stroke:0.49px #f0f5fd;">Hoffer</div>
<div class="t" style="left:2490.27px;top:1276px;font-size:30.75px;line-height:30.75px;color:#1c1c1c;transform:scaleX(1.1132);-webkit-text-stroke:0.49px #f0f5fd;">k.hofer@edoobox.com</div>
<div class="t" style="left:2977.64px;top:1276px;font-size:30.75px;line-height:30.75px;color:#1c1c1c;transform:scaleX(1.0772);-webkit-text-stroke:0.49px #f0f5fd;">234</div>
<div class="r" style="left:816px;top:1397px;width:2533px;height:2px;background:#dedede;"></div>
<div class="r" style="left:982.5px;top:1327px;width:2px;height:70px;background:#dfdfdf;"></div>
<div class="r" style="left:1470px;top:1327px;width:2px;height:70px;background:#dfdfdf;"></div>
<div class="r" style="left:1956.6px;top:1327px;width:2px;height:70px;background:#dfdfdf;"></div>
<div class="r" style="left:2444.3px;top:1327px;width:2px;height:70px;background:#dfdfdf;"></div>
<div class="r" style="left:2931.5px;top:1327px;width:2px;height:70px;background:#dfdfdf;"></div>
<div class="r" style="left:861px;top:1341px;width:45px;height:45px;background:#ffffff;border:2px solid #c9c9c9;border-radius:5px;box-sizing:border-box;"></div>
<div class="t" style="left:1028.49px;top:1348px;font-size:30.75px;line-height:30.75px;color:#1c1c1c;transform:scaleX(1.0999);-webkit-text-stroke:0.49px #ffffff;">Frau</div>
<div class="t" style="left:1517.50px;top:1348px;font-size:30.75px;line-height:30.75px;color:#1c1c1c;transform:scaleX(1.0765);-webkit-text-stroke:0.49px #ffffff;">Jessika</div>
<div class="t" style="left:2002.99px;top:1348px;font-size:30.75px;line-height:30.75px;color:#1c1c1c;transform:scaleX(1.0997);-webkit-text-stroke:0.49px #ffffff;">Krueger</div>
<div class="t" style="left:2492.01px;top:1348px;font-size:30.75px;line-height:30.75px;color:#1c1c1c;transform:scaleX(1.0572);-webkit-text-stroke:0.49px #ffffff;">Jessika.Krueger@edoob…</div>
<div class="t" style="left:2977.16px;top:1348px;font-size:30.75px;line-height:30.75px;color:#1c1c1c;transform:scaleX(0.9260);-webkit-text-stroke:0.49px #ffffff;">15259191</div>
<div class="r" style="left:816px;top:1632px;width:2557px;height:2px;background:#dedede;"></div>
<svg class="r" style="left:880px;top:1686px;" width="30" height="26" viewBox="0 0 30 26"><path d="M5.4 2 V23" stroke="#c6c6c6" stroke-width="3.4"/><path d="M24.5 3 L14.5 12.5 L24.5 22" fill="none" stroke="#c6c6c6" stroke-width="3.4"/></svg>
<svg class="r" style="left:982px;top:1686px;" width="20" height="26" viewBox="0 0 20 26"><path d="M16 3 L6 12.5 L16 22" fill="none" stroke="#c6c6c6" stroke-width="3.4"/></svg>
<svg class="r" style="left:1055px;top:1669px;" width="67" height="62" viewBox="0 0 67 62"><ellipse cx="33.4" cy="31" rx="32.6" ry="30" fill="#7694f1"/></svg>
<svg class="r" style="left:1083px;top:1687px;" width="10" height="24" viewBox="0 0 10 24"><rect x="3.4" y="1.2" width="4.4" height="22" fill="#ffffff"/><rect x="1.2" y="1.2" width="4" height="3.6" fill="#ffffff"/></svg>
<svg class="r" style="left:1178px;top:1686px;" width="20" height="26" viewBox="0 0 20 26"><path d="M4 3 L14 12.5 L4 22" fill="none" stroke="#c6c6c6" stroke-width="3.4"/></svg>
<svg class="r" style="left:1272px;top:1686px;" width="28" height="26" viewBox="0 0 28 26"><path d="M23.1 2 V23" stroke="#c6c6c6" stroke-width="3.4"/><path d="M3.8 3 L13.8 12.5 L3.8 22" fill="none" stroke="#c6c6c6" stroke-width="3.4"/></svg>
<div class="t" style="left:1430.81px;top:1686px;font-size:34.50px;line-height:34.50px;color:#5f656d;transform:scaleX(1.0372);-webkit-text-stroke:0.55px #ffffff;">25</div>
<svg class="r" style="left:1545px;top:1696px;" width="30" height="16" viewBox="0 0 30 16"><path d="M0 0 h29 l-14.5 15z" fill="#8a8a8a"/></svg>
<div class="t" style="left:1655.52px;top:1686px;font-size:31.75px;line-height:31.75px;color:#454a52;transform:scaleX(1.0959);-webkit-text-stroke:0.51px #ffffff;">Einträge anzeigen</div>
<div class="t" style="left:2936.28px;top:1678px;font-size:30.75px;line-height:30.75px;color:#43474d;transform:scaleX(1.0729);-webkit-text-stroke:0.49px #ffffff;">1 von 1 Seiten (9 Einträge)</div>
<div class="r" style="left:3450px;top:2px;width:25px;height:1954px;background:#f5f5f5;"></div>
<svg class="r" style="left:3454px;top:8px;" width="17" height="14" viewBox="0 0 17 14"><path d="M8.5 3 L14.5 11" stroke="#cfcfcf" stroke-width="0"/><path d="M7 1.5 a2 2 0 0 1 3 0 L15.6 10 a1.8 1.8 0 0 1 -1.5 2.7 h-11.2 a1.8 1.8 0 0 1 -1.5 -2.7z" fill="#cfcfcf"/></svg>
<svg class="r" style="left:3454px;top:1937px;" width="17" height="12" viewBox="0 0 17 12"><path d="M8.5 11 L16 1.5 a1 1 0 0 0 -0.8 -1.5 h-13.4 a1 1 0 0 0 -0.8 1.5z" fill="#c9c9c9"/></svg>
<div class="r" style="left:0px;top:0px;width:3475px;height:1px;background:#000000;"></div>
<div class="r" style="left:0px;top:1px;width:3475px;height:1px;background:rgba(0,0,0,0.25);"></div>
<svg class="r" style="left:0px;top:1932px;" width="3475" height="24" viewBox="0 0 3475 24"><path d="M0 0 V6 A18 18 0 0 0 18 24 H0z" fill="#111"/><path d="M3475 0 V6 A18 18 0 0 1 3457 24 H3475z" fill="#111"/><rect x="0" y="22.6" width="3475" height="1.4" fill="#111"/></svg>
</body></html>
